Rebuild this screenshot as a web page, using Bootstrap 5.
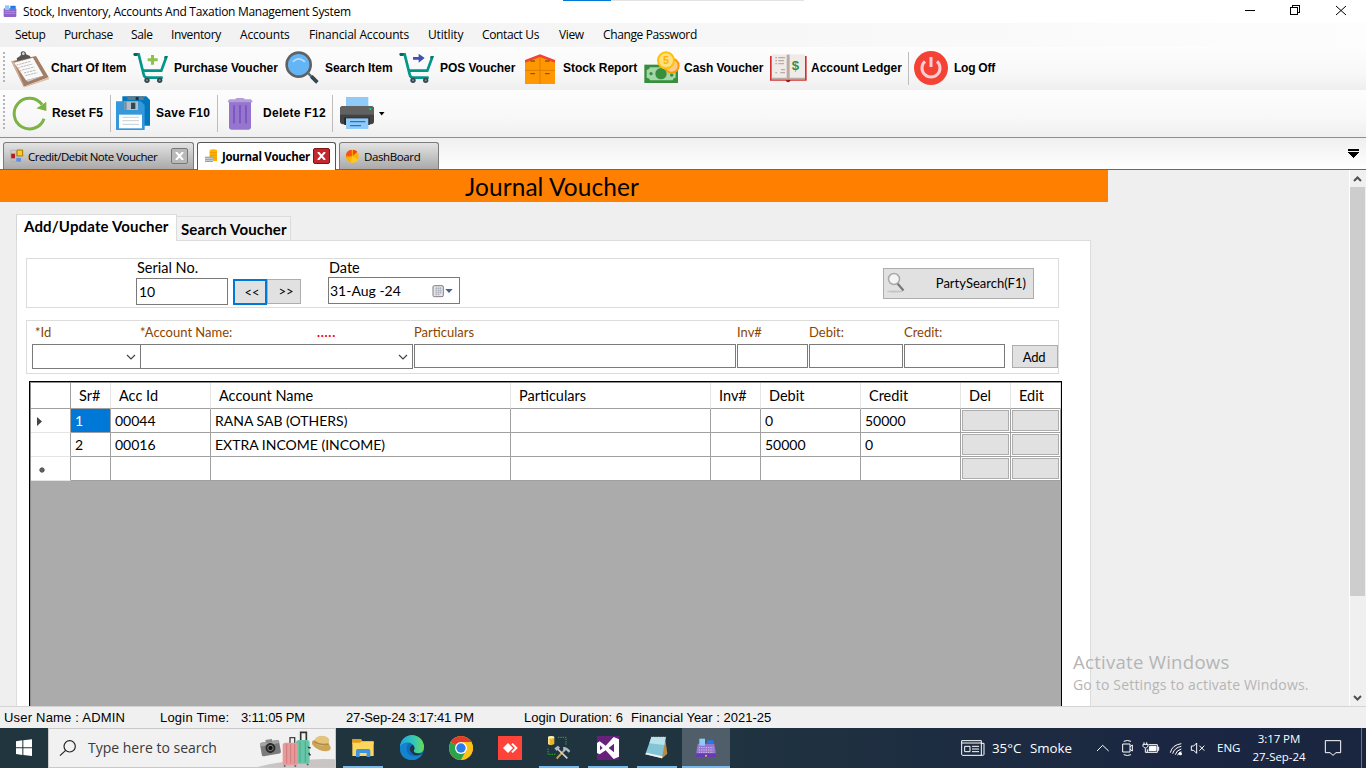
<!DOCTYPE html>
<html lang="en">
<head>
<meta charset="utf-8">
<title>Stock, Inventory, Accounts And Taxation Management System</title>
<link rel="stylesheet" href="https://cdn.jsdelivr.net/npm/bootstrap@5.3.0/dist/css/bootstrap.min.css">
<style>
body{width:1366px;height:768px;overflow:hidden;background:#f0f0f0;color:#000;font:12px/16px "Open Sans",sans-serif;display:flex;flex-direction:column}
svg{display:block;flex:none}
span,label{white-space:nowrap}
/* window frame */
.titlebar{height:23px;background:#fff;flex:none}
.titlebar .caption{letter-spacing:-.29px;width:1221px}
.progress-edge{top:0;left:563px;width:241px;height:1px;background:linear-gradient(90deg,#0078d7 48px,#e3e3e3 48px)}
.menubar{height:24px;flex:none;display:grid;grid-template-columns:49px 67px 40px 69px 69px 119px 54px 77px 44px 1fr;padding-left:15px;align-items:center;background:linear-gradient(90deg,#f0f0f0,#fdfdfd);letter-spacing:-.37px}
.menubar .ls-wide{letter-spacing:-.18px}
/* toolbars */
.toolrow{display:grid;align-items:center;flex:none;background:linear-gradient(#fdfdfd,#f8f8f8 60%,#efefef);font:bold 12px/16px "Liberation Sans",sans-serif;position:relative}
.toolrow::before{content:"";position:absolute;left:3px;top:5px;bottom:8px;width:2px;background:repeating-linear-gradient(#b5b5b5 0 2px,transparent 2px 4px)}
.toolrow span{padding-bottom:2px}
.tools-main{height:43px;padding-left:11px;grid-template-columns:40px 82px 41px 111px 40px 74px 41px 85px 38px 81px 40px 86px 41px 97px 6px 40px 1fr;letter-spacing:-.04px}
.tools-edit{height:47px;padding-left:12px;grid-template-columns:40px 58px 6px 40px 61px 10px 36px 69px 8px 38px 1fr}
.tools-edit span{letter-spacing:.28px}
.tools-edit span:nth-of-type(1){letter-spacing:.12px}
.tools-main span:last-child{letter-spacing:-.24px}
.sep{width:1px;background:#bdbdbd;align-self:stretch;margin:5px 0}
/* document tabs */
.doctabs{height:33px;flex:none;border-top:1px solid #8f8f8f;border-bottom:1px solid #696969;background:linear-gradient(#efefef,#fff);padding-left:3px;align-items:flex-end}
.doctab{height:27px;border:1px solid #7b7b7b;border-bottom:0;border-radius:3px 3px 0 0;background:linear-gradient(#e3e3e3,#a9a9a9);padding:1px 0 0 5px;font-size:11.5px;letter-spacing:-.38px}
.doctab.on{background:#fff;height:28px;margin-bottom:-1px;border-color:#555;font-weight:700;position:relative;letter-spacing:-.3px}
.dt-note{width:191px;letter-spacing:-.52px}
.dt-journal{width:139px;margin-left:3px}
.dt-dash{width:100px;margin-left:3px}
.closebox{width:17px;height:16px;border:1px solid #777;border-radius:2px;background:#b9b9b9;padding:3px;margin:-2px 5px 0 0}
.doctab.on .closebox{background:#c2282d;border-color:#7d1418}
/* workspace */
.workspace{height:536px;flex:none;overflow:hidden;background:#efefef}
.canvas{width:1349px}
.headline{width:1108px;height:32px;background:#ff8000;font:24.4px/34px Lato,sans-serif;letter-spacing:.12px;padding-left:465px}
.vtabs{padding:12px 0 0 16px;height:38px;font:bold 15px/20px Lato,sans-serif;letter-spacing:.15px;position:relative;z-index:1}
.vtab{border:1px solid #dcdcdc;border-bottom:0}
.vtab.on{width:161px;height:27px;background:#fff;padding:1px 0 0 7px;border-left-color:#d5d5d5}
.vtab.off{width:114px;height:24px;margin-top:2px;padding:2px 0 0 4px;border-left:0;background:#f2f2f2}
.sheet{margin-left:16px;width:1075px;height:480px;border:1px solid #dcdcdc;background:#fff;padding:17px 0 0 9px;font:14.5px/18px Lato,sans-serif}
.groupbox{width:1033px;border:1px solid #dcdcdc}
.g1{height:50px;padding-left:109px}
.g1 label{display:block;padding-left:1px}
.g2{height:54px;margin-top:12px;padding-left:5px;font-size:13px;color:#8b4500}
.g2-labels{display:grid;grid-template-columns:3px 105px 177px 97px 323px 72px 95px 1fr;height:23px;padding-bottom:1px;align-items:center}
.dots{color:red;font-weight:700;letter-spacing:.7px}
.field{border:1px solid #7a7a7a;background:#fff;display:flex;align-items:center;color:#000;height:24px;margin-left:1px}
.field.serial{width:92px;height:27px;margin:1px 0 0;padding-left:2px;font-size:14px}
.field.date{width:132px;height:27px;margin:0;padding-left:1px;font-size:14px}
.field.combo-id{width:109px;height:25px;margin:0}
.field.combo-name{width:273px;height:25px;margin-left:-1px}
.w-part{width:322px}.w-inv{width:71px}.w-debit{width:94px}.w-credit{width:101px}
.face{background:#e1e1e1;border:1px solid #adadad;display:flex;align-items:center;justify-content:center;color:#000}
.stepper{margin:20px 27px 0 5px;font-size:13px}
.stepper .face{width:34px;height:25px;padding:0 0 1px 4px}
.stepper .face:first-child{height:26px;border:2px solid #0078d7}
.party{width:151px;height:31px;margin:9px 24px 0 0;padding:0 7px 1px 0;font-size:13px}
.addbtn{width:46px;height:23px;margin:1px 0 0 7px;padding-right:2px;letter-spacing:-.3px}
/* voucher grid */
.gridbox{margin:7px 0 0 3px;width:1033px;height:400px;background:#ababab;border:1px solid #000;box-shadow:inset 1px 1px 0 #8f8f8f;padding:1px 0 0 1px}
.vgrid{width:1030px;table-layout:fixed;border-collapse:separate;border-spacing:0;font:14.5px/18px Lato,sans-serif}
.c40{width:40px}.c50{width:50px}.c100{width:100px}.c200{width:200px}.c300{width:300px}
.vgrid th{font-weight:400;height:26px;padding:0 0 0 8px;border-right:1px solid #e5e5e5;border-bottom:1px solid #a0a0a0;background:#fff}
.vgrid td{height:24px;padding:0 0 0 4px;border-right:1px solid #a0a0a0;border-bottom:1px solid #a0a0a0;background:#fff;font-size:14px}
.vgrid tr>:first-child{border-right-color:#a0a0a0}
.vgrid td:first-child{border-bottom-color:#e5e5e5;padding:0}
.vgrid td.picked{background:#0078d7;color:#fff}
.vgrid td.cellbtn{padding:1px}
.cellbtn i{display:block;height:21px;background:#e1e1e1;border:1px solid #adadad}
.vscroll{width:17px;border-left:1px solid #fff;background:#f0f0f0}
.vscroll b{display:block;width:15px;height:409px;background:#cdcdcd}
.watermark{left:1073px;top:650px;color:#b5b5b5;font-size:18.6px;line-height:24px;letter-spacing:.25px}
.watermark small{font-size:14px;line-height:21px;letter-spacing:.18px;display:block}
/* status line and taskbar */
.statusline{height:22px;flex:none;border-top:1px solid #d5d5d5;background:#f0f0f0;display:grid;grid-template-columns:156px 81px 105px 178px 107px 1fr;padding-left:4px;align-items:center;font:13px/16px "Liberation Sans",sans-serif}
.statusline .wide{letter-spacing:.2px}
.statusline .tight{letter-spacing:-.15px}
.taskbar{height:40px;flex:none;background:linear-gradient(90deg,#20353d,#203440 50%,#1b2742 85%,#1a2540);color:#fff}
.seek{width:288px;background:#f1f1f1;border:1px solid #c9c9c9;margin-right:2px;color:#3a3a3a;font-size:14px}
.task{width:49px;height:40px;position:relative}
.task.open::after{content:"";position:absolute;left:5px;right:4px;bottom:0;height:2px;background:#76b9ed}
.task.front{background:linear-gradient(90deg,transparent 1px,#4f5e68 1px)}
.task.front::after{left:1px;right:0}
.temp{width:38px;font-size:13.3px}
.sky{width:61px;font-size:13.3px}
.lang{width:35px;font-size:11.5px}
.clock{width:54px;margin-right:1px;font-size:11.5px;line-height:18px;text-align:center;letter-spacing:-.08px}
.peek{width:1px;height:40px;background:#68738a;margin:0 4px 0 12px}
</style>
</head>
<body>
<header class="titlebar d-flex align-items-center position-relative">
  <div class="progress-edge position-absolute"></div>
  <svg width="23" height="23" viewBox="0 0 69 69"><rect x="11" y="25" width="38" height="26" rx="3" fill="#8e62c8"/><rect x="15" y="16" width="13" height="14" fill="#8ac8fa"/><rect x="31" y="17" width="16" height="9" rx="2" fill="#1c7ce6"/><path d="M14 34H46M14 40H46" stroke="#b48be4" stroke-width="3"/></svg>
  <span class="caption">Stock, Inventory, Accounts And Taxation Management System</span>
  <svg width="122" height="23" viewBox="1244 0 122 23" fill="none" stroke="#000" shape-rendering="crispEdges"><path d="M1245 10.500H1255M1290.500 7.500H1297.500V14.500H1290.500ZM1292.500 7V5.500H1299.500V12.500H1298"/><path d="M1336 6L1346 15M1346 6L1336 15" shape-rendering="auto"/></svg>
</header>

<nav class="menubar"><span>Setup</span><span>Purchase</span><span>Sale</span><span>Inventory</span><span class="ls-wide">Accounts</span><span class="ls-wide">Financial Accounts</span><span class="ls-wide">Utitlity</span><span>Contact Us</span><span>View</span><span>Change Password</span></nav>

<div class="toolrow tools-main">
  <svg width="40" height="43" viewBox="33 141 120 129"><path d="M34 184L108 168L146 232L71 260Z" fill="#a47d65"/><path d="M34 184L71 260V255L40 182Z" fill="#d0b29d"/><path d="M71 260L146 232L147 238L75 262Z" fill="#d9c2b0"/><path d="M42 188L99 173L130 227L78 241Z" fill="#fafafa"/><path d="M130 227L78 241L84 245Z" fill="#ccc"/><path d="M50 175Q58 170 63 165Q60 154 69 154Q79 155 78 163L90 168L92 173L52 183Z" fill="#555"/><circle cx="70" cy="161" r="4" fill="#ddd"/><path d="M58 193L92 184M62 201L98 192M67 210L103 201M72 219L108 210M76 227L112 218" stroke="#aaa" stroke-width="2.500" stroke-dasharray="7 2"/><path d="M50 195L55 194M54 204L59 203M59 213L64 212" stroke="#e88" stroke-width="3"/></svg>
  <span>Chart Of Item</span>
  <svg width="41" height="43" viewBox="399 141 123 129"><g id="cart"><path d="M404 163H416L431 223Q433 233 440 233H485" fill="none" stroke="#009688" stroke-width="8" stroke-linecap="round"/><path d="M429 212H484L499 171" fill="none" stroke="#009688" stroke-width="8"/><rect x="401" y="159" width="12" height="9" rx="4" fill="#00695c"/><path d="M494 168H504L501 175H492Z" fill="#00796b"/><circle cx="441" cy="241" r="8" fill="#37474f"/><circle cx="479" cy="241" r="8" fill="#37474f"/><circle cx="441" cy="241" r="3" fill="#78909c"/><circle cx="479" cy="241" r="3" fill="#78909c"/></g><path d="M453 165H462V175H473V184H462V194H453V184H443V175H453Z" fill="#8bc34a"/></svg>
  <span>Purchase Voucher</span>
  <svg width="40" height="43" viewBox="855 141 120 129"><path d="M925 220L951 247" stroke="#546e7a" stroke-width="7"/><path d="M934 229L952 247" stroke="#37474f" stroke-width="11"/><circle cx="896" cy="194" r="40" fill="#616161"/><circle cx="896" cy="194" r="32" fill="#64b5f6"/><path d="M880 184Q896 169 913 184" fill="none" stroke="#bbdefb" stroke-width="5" stroke-linecap="round"/></svg>
  <span>Search Item</span>
  <svg width="41" height="43" viewBox="27 141 123 129"><use href="#cart" x="-372"/><path d="M69 171H86V161L104 174L86 188V179H69Z" fill="#3f51b5"/></svg>
  <span>POS Voucher</span>
  <svg width="38" height="43" viewBox="405 141 114 129"><path d="M405 184L450 165L495 184V252H405Z" fill="#ff9800"/><path d="M405 180L450 163L495 180V188L450 171L405 188Z" fill="#f44336"/><path d="M450 172V252M405 211H495" stroke="#dd7d00" stroke-width="3"/><path d="M421 183H435M465 183H479M421 221H435M465 221H479" stroke="#8a5a00" stroke-width="4"/></svg>
  <span>Stock Report</span>
  <svg width="40" height="43" viewBox="762 141 120 129"><rect x="763" y="194" width="101" height="55" fill="#388e3c"/><path d="M780 202H848Q849 209 857 210V233Q849 234 848 241H780Q779 234 770 233V210Q779 209 780 202Z" fill="#a5d6a7"/><circle cx="813" cy="221" r="17" fill="#388e3c"/><circle cx="783" cy="221" r="5" fill="#388e3c"/><circle cx="845" cy="225" r="5" fill="#388e3c"/><circle cx="845" cy="197" r="24" fill="#ff9800"/><circle cx="845" cy="197" r="18" fill="#ffc98a"/><circle cx="828" cy="181" r="27" fill="#ffc107"/><circle cx="828" cy="181" r="21" fill="#ffe082"/><text x="828" y="193" text-anchor="middle" font-family="Liberation Sans" font-weight="bold" font-size="32" fill="#ffb300">5</text></svg>
  <span>Cash Voucher</span>
  <svg width="41" height="43" viewBox="1140 141 123 129"><path d="M1140 168H1250V242H1140Z" fill="#d32f2f"/><path d="M1188 240H1202Q1200 247 1194 247T1188 240Z" fill="#a01c1c"/><path d="M1145 163H1194V236H1145ZM1196 163H1245V236H1196Z" fill="#efebe9"/><path d="M1145 233H1190L1194 238L1198 233H1245V239H1145Z" fill="#bcaaa4"/><path d="M1190 164H1199V236H1190Z" fill="#bcaaa4"/><path d="M1156 173H1161M1165 173H1185M1156 182H1161M1165 182H1182M1156 191H1161M1165 191H1182M1173 209H1185M1156 218H1161M1171 218H1185" stroke="#bcaaa4" stroke-width="4"/><text x="1216" y="210" text-anchor="middle" font-family="Liberation Sans" font-weight="bold" font-size="40" fill="#388e3c">$</text></svg>
  <span>Account Ledger</span>
  <i class="sep"></i>
  <svg width="40" height="43" viewBox="0 141 120 129"><circle cx="51" cy="204" r="51" fill="#f44336"/><path d="M33 184A27 27 0 1 0 69 184" fill="none" stroke="#ffcdd2" stroke-width="9"/><path d="M51 171V201" stroke="#ffcdd2" stroke-width="9"/></svg>
  <span>Log Off</span>
</div>

<div class="toolrow tools-edit">
  <svg width="40" height="47" viewBox="36 270 120 141"><path d="M132 356A46 46 0 1 1 126 314" fill="none" stroke="#7cb342" stroke-width="9"/><path d="M139 305V333L109 325L122 317Z" fill="#7cb342"/></svg>
  <span>Reset F5</span>
  <i class="sep"></i>
  <svg width="40" height="47" viewBox="348 270 120 141"><path d="M367 289H439L450 300V377H367Z" fill="#0277bd"/><path d="M382 289H431V300H382Z" fill="#607d8b"/><path d="M407 291H416V300H407Z" fill="#263238"/><path d="M348 304H423L434 315V390H348Z" fill="#3498db"/><path d="M373 304H414V330H373Z" fill="#b0bec5"/><path d="M373 304H380V330H373Z" fill="#78909c"/><path d="M393 308H406V327H393Z" fill="#37474f"/><path d="M357 344H426V385H357Z" fill="#fff"/><path d="M367 352H417M367 362H417M367 373H417" stroke="#cfd8dc" stroke-width="4"/></svg>
  <span>Save F10</span>
  <i class="sep"></i>
  <svg width="36" height="47" viewBox="681 270 108 141"><path d="M687 306H753V382Q753 389 746 389H694Q687 389 687 382Z" fill="#9575cd"/><path d="M702 318V368M720 318V368M738 318V368" stroke="#7e57c2" stroke-width="6" stroke-linecap="round"/><path d="M706 298Q707 294 712 294H728Q733 294 734 298H752Q757 299 758 307H683Q684 299 689 298Z" fill="#b39ddb"/></svg>
  <span>Delete F12</span>
  <i class="sep"></i>
  <svg width="38" height="47" viewBox="1020 270 114 141"><path d="M1038 291H1105V325H1038Z" fill="#90caf9"/><rect x="1020" y="318" width="102" height="55" rx="9" fill="#424242"/><path d="M1029 318H1113Q1122 320 1122 328V344H1020V328Q1021 319 1029 318Z" fill="#616161"/><circle cx="1111" cy="327" r="3" fill="#00e676"/><path d="M1033 353H1109V375H1033Z" fill="#242424"/><path d="M1038 355H1105V387H1038Z" fill="#90caf9"/><path d="M1050 365H1096M1050 377H1083" stroke="#1976d2" stroke-width="4"/></svg>
  <svg width="8" height="47" viewBox="0 0 8 47"><path d="M1 22H6.500L3.700 25.500Z"/></svg>
</div>

<div class="doctabs d-flex">
  <div class="doctab dt-note d-flex align-items-center">
    <svg width="19" height="20" viewBox="24 184 57 60"><path d="M30 204H42V218H30Z" fill="#b71c1c"/><path d="M29 194H46V228H30Z" fill="none" stroke="#aaa" stroke-width="2"/><path d="M48 193H65V211H48Z" fill="#ffca28" stroke="#a87b00" stroke-width="3"/><path d="M46 217H60V228H46Z" fill="#5b8fe8"/></svg>
    <span class="me-auto">Credit/Debit Note Voucher</span><div class="closebox"><svg width="9" height="8" viewBox="0 0 9 8"><path d="M1 0L8 8M8 0L1 8" stroke="#fff" stroke-width="2"/></svg></div>
  </div>
  <div class="doctab dt-journal on d-flex align-items-center">
    <svg width="19" height="20" viewBox="606 182 57 60"><path d="M626 191Q637 187 648 191V224H626Z" fill="#ffb300"/><path d="M626 199H648M626 207H648M626 215H648" stroke="#e09000" stroke-width="2"/><path d="M612 211H636V227H612Z" fill="#90a4ae"/><path d="M612 216H636M612 222H636" stroke="#eceff1" stroke-width="2"/></svg>
    <span class="me-auto">Journal Voucher</span><div class="closebox"><svg width="9" height="8" viewBox="0 0 9 8"><path d="M1 0L8 8M8 0L1 8" stroke="#fff" stroke-width="2"/></svg></div>
  </div>
  <div class="doctab dt-dash d-flex align-items-center">
    <svg width="19" height="20" viewBox="1033 182 57 60"><circle cx="1055" cy="210" r="19" fill="#ffb300"/><path d="M1055 210V191A19 19 0 0 0 1036 214Z" fill="#ff8f00"/><path d="M1053 210L1036 208A19 19 0 0 1 1053 190Z" fill="#f4511e"/><path d="M1057 208V190A19 19 0 0 1 1070 196Z" fill="#f4421f"/><path d="M1055 210L1072 220A19 19 0 0 1 1050 228Z" fill="#ffca28"/></svg>
    <span>DashBoard</span>
  </div>
  <svg class="ms-auto me-1" width="16" height="26" viewBox="0 0 16 26" shape-rendering="crispEdges"><path d="M2 6H13V8H2ZM2 9H13L7.500 15Z"/></svg>
</div>

<main class="workspace d-flex">
  <div class="canvas">
    <div class="headline"><span>Journal Voucher</span></div>
    <div class="vtabs d-flex"><div class="vtab on"><span>Add/Update Voucher</span></div><div class="vtab off"><span>Search Voucher</span></div></div>
    <div class="sheet">
      <div class="groupbox g1 d-flex">
        <div><label>Serial No.</label><div class="field serial"><span>10</span></div></div>
        <div class="stepper d-flex"><div class="face">&lt;&lt;</div><div class="face">&gt;&gt;</div></div>
        <div><label>Date</label><div class="field date"><span class="me-auto">31-Aug -24</span><svg width="27" height="20" viewBox="1297 240 81 60"><rect x="1300" y="254" width="31" height="33" rx="4" fill="#e5e5e9" stroke="#857a7e" stroke-width="3"/><path d="M1306 262H1326M1306 268H1326M1306 274H1326M1306 280H1320M1310 258V283M1317 258V283M1323 258V279" stroke="#9a9fb0" stroke-width="1.500"/><path d="M1337 264H1359L1348 276Z" fill="#44608e"/></svg></div></div>
        <div class="face party ms-auto"><svg class="me-auto" width="28" height="28" viewBox="0 0 28 28"><ellipse cx="11" cy="22.500" rx="8" ry="1" fill="#c4c4c4"/><path d="M13 14L19.500 21.500" stroke="#777" stroke-width="2.200"/><circle cx="10" cy="10" r="5.500" fill="#f4f4f4" stroke="#a9a9a9" stroke-width="1.500"/></svg><span>PartySearch(F1)</span></div>
      </div>
      <div class="groupbox g2">
        <div class="g2-labels"><i></i><span>*Id</span><span>*Account Name:</span><span class="dots">.....</span><span>Particulars</span><span>Inv#</span><span>Debit:</span><span>Credit:</span></div>
        <div class="d-flex">
          <div class="field combo-id"><svg class="ms-auto me-1" width="10" height="8" viewBox="0 0 10 8"><path d="M1 2L5 6L9 2" fill="none" stroke="#444" stroke-width="1.200"/></svg></div>
          <div class="field combo-name"><svg class="ms-auto me-1" width="10" height="8" viewBox="0 0 10 8"><path d="M1 2L5 6L9 2" fill="none" stroke="#444" stroke-width="1.200"/></svg></div>
          <div class="field w-part"></div><div class="field w-inv"></div><div class="field w-debit"></div><div class="field w-credit"></div>
          <div class="face addbtn"><span>Add</span></div>
        </div>
      </div>
      <div class="gridbox">
        <table class="vgrid">
          <colgroup><col class="c40"><col class="c40"><col class="c100"><col class="c300"><col class="c200"><col class="c50"><col class="c100"><col class="c100"><col class="c50"><col class="c50"></colgroup>
          <tr><th></th><th>Sr#</th><th>Acc Id</th><th>Account Name</th><th>Particulars</th><th>Inv#</th><th>Debit</th><th>Credit</th><th>Del</th><th>Edit</th></tr>
          <tr><td><svg width="20" height="20" viewBox="0 0 20 20"><path d="M6 6L11 10.500L6 15Z" fill="#444"/></svg></td><td class="picked">1</td><td>00044</td><td>RANA SAB (OTHERS)</td><td></td><td></td><td>0</td><td>50000</td><td class="cellbtn"><i></i></td><td class="cellbtn"><i></i></td></tr>
          <tr><td></td><td>2</td><td>00016</td><td>EXTRA INCOME (INCOME)</td><td></td><td></td><td>50000</td><td>0</td><td class="cellbtn"><i></i></td><td class="cellbtn"><i></i></td></tr>
          <tr><td><svg width="20" height="20" viewBox="0 0 20 20"><circle cx="11" cy="11" r="2.500" fill="#555"/><path d="M11 8V14M8 11H14M9 9L13 13M13 9L9 13" stroke="#666" stroke-width=".7"/></svg></td><td></td><td></td><td></td><td></td><td></td><td></td><td></td><td class="cellbtn"><i></i></td><td class="cellbtn"><i></i></td></tr>
        </table>
      </div>
    </div>
  </div>
  <div class="vscroll d-flex flex-column">
    <svg width="16" height="17" viewBox="0 0 16 17"><path d="M4 11L7.500 7.500L11 11" fill="none" stroke="#505050" stroke-width="2"/></svg><b></b>
    <svg class="mt-auto" width="16" height="17" viewBox="0 0 16 17"><path d="M4 7L7.500 10.500L11 7" fill="none" stroke="#505050" stroke-width="2"/></svg>
  </div>
</main>
<div class="watermark position-absolute"><span>Activate Windows</span><small><span>Go to Settings to activate Windows.</span></small></div>

<footer class="statusline"><span class="wide">User Name : ADMIN</span><span class="wide">Login Time:</span><span class="tight">3:11:05 PM</span><span class="tight">27-Sep-24 3:17:41 PM</span><span>Login Duration: 6</span><span>Financial Year : 2021-25</span></footer>

<div class="taskbar d-flex align-items-center">
  <svg width="48" height="40" viewBox="0 84 144 120" fill="#fff"><path d="M48 124L67 121V142H48ZM70 121L96 118V142H70ZM48 145H67V165L48 162ZM70 145H96V168L70 165Z"/></svg>
  <div class="seek d-flex align-items-center align-self-stretch">
    <svg width="39" height="38" viewBox="147 87 117 114"><circle cx="209" cy="139" r="17" fill="none" stroke="#222" stroke-width="3.500"/><path d="M197 151L180 167" stroke="#222" stroke-width="3.500"/></svg>
    <span class="me-auto">Type here to search</span>
    <svg width="78" height="38" viewBox="774 87 234 114"><path d="M774 201Q840 184 900 182Q960 174 1008 178V201Z" fill="#c9c5c5"/><g transform="rotate(-10 814 142)"><rect x="785" y="124" width="58" height="41" rx="5" fill="#7b7b7b"/><rect x="785" y="124" width="58" height="10" rx="4" fill="#a4a4a4"/><rect x="803" y="118" width="20" height="9" fill="#8b8b8b"/><circle cx="814" cy="144" r="15" fill="#2a2a2a"/><circle cx="814" cy="144" r="8" fill="#111" stroke="#aaa" stroke-width="2"/></g><path d="M905 124V97H922V124" fill="none" stroke="#333" stroke-width="5"/><path d="M873 131V113H887V131" fill="none" stroke="#444" stroke-width="4"/><rect x="891" y="120" width="41" height="71" rx="8" fill="#68c6a8"/><path d="M903 124V187M919 124V187" stroke="#4aa688" stroke-width="3"/><rect x="851" y="128" width="45" height="68" rx="8" fill="#e89a9a"/><path d="M863 132V190M875 132V190M887 132V190" stroke="#cf7c7c" stroke-width="3"/><path d="M857 196V200M889 196V200M926 191V196" stroke="#555" stroke-width="5"/><path d="M928 140Q928 145 935 143M930 158Q930 166 935 164" stroke="#333" stroke-width="4"/><ellipse cx="967" cy="136" rx="30" ry="15" transform="rotate(22 967 136)" fill="#cda557"/><ellipse cx="969" cy="122" rx="22" ry="15" fill="#e3c47f"/><path d="M946 124Q962 137 990 132" stroke="#b28a42" stroke-width="5" fill="none"/></svg>
  </div>
  <div class="task open"><svg width="49" height="40" viewBox="1014 84 147 120"><path d="M1057 117H1083L1087 123H1121V133H1057Z" fill="#e8a33d"/><path d="M1057 125H1121V168H1057Z" fill="#ffd65c"/><path d="M1057 117H1081L1084 124L1080 128H1057Z" fill="#e39b1c"/><path d="M1068 171V152Q1068 147 1073 147H1106Q1111 147 1111 152V171H1100V159H1079V171Z" fill="#3d95e0"/></svg></div>
  <div class="task"><svg width="49" height="40" viewBox="21 84 147 120"><defs><linearGradient id="eg" x1="0" x2="1"><stop offset="0" stop-color="#1fa5e8"/><stop offset=".6" stop-color="#36c9b0"/><stop offset="1" stop-color="#6bdc56"/></linearGradient></defs><circle cx="96" cy="144" r="36" fill="#0f6cbd"/><path d="M60 141A36 36 0 0 1 132 141Q132 160 111 160Q96 159 102 150Q107 143 99 134Q88 124 73 130Q64 134 60 141Z" fill="url(#eg)"/><path d="M60 144Q66 127 88 129Q77 136 80 152Q86 170 106 169Q118 168 127 162Q116 180 96 180Q60 178 60 144Z" fill="#1584cf"/><path d="M98 134Q88 139 90 151Q95 166 112 166Q122 165 127 160Q116 162 108 159Q99 156 102 150Q106 142 98 134Z" fill="#20353f"/></svg></div>
  <div class="task"><svg width="49" height="40" viewBox="168 84 147 120"><circle cx="243" cy="144" r="36" fill="#fbc116"/><path d="M243 144L212 126A36 36 0 0 1 274 126Z" fill="#e33b2e"/><path d="M243 144L212 126A36 36 0 0 0 243 180L258 153Z" fill="#2ba24c"/><path d="M243 126H274A36 36 0 0 1 243 180L258 153Z" fill="#fbc116"/><circle cx="243" cy="144" r="18" fill="#fff"/><circle cx="243" cy="144" r="14" fill="#2b7de9"/></svg></div>
  <div class="task"><svg width="49" height="40" viewBox="315 84 147 120"><path d="M354 108H426V180H354Z" fill="#ff4338"/><path d="M384 129L399 144L384 159L369 144Z" fill="#fff"/><path d="M396 131L409 144L396 157" fill="none" stroke="#fff" stroke-width="6"/></svg></div>
  <div class="task open"><svg width="49" height="40" viewBox="462 84 147 120"><path d="M504 112V132Q513 139 523 132V112Z" fill="#e5b530"/><path d="M504 112V132L509 135V112Z" fill="#f9e38f"/><ellipse cx="513.500" cy="112" rx="9.500" ry="4" fill="#fff0a8"/><path d="M534 112H558V134M504 146V163H528" fill="none" stroke="#29b329" stroke-width="3" stroke-dasharray="4 3"/><path d="M530 176L558 145" stroke="#d6a23a" stroke-width="6"/><path d="M530 144L562 175" stroke="#cfd6dc" stroke-width="5"/><path d="M523 145L534 137L540 143L530 153ZM549 141Q560 139 571 153L566 158L558 150L551 156Z" fill="#aeb9c4"/></svg></div>
  <div class="task open"><svg width="49" height="40" viewBox="609 84 147 120"><path d="M651 108H718V180H651Z" fill="#68217a"/><path d="M651 129L659 124L677 137L701 111L717 118V170L701 177L677 151L659 163L651 159ZM660 136V151L668 144ZM702 131L686 144L702 157Z" fill="#fff" fill-rule="evenodd"/></svg></div>
  <div class="task open"><svg width="49" height="40" viewBox="756 84 147 120"><path d="M856 118L862 161L845 176L848 120Z" fill="#b78a45"/><path d="M814 112H857L846 175L796 163Z" fill="#83c5d6"/><path d="M814 112H857L853 135L808 130Z" fill="#b9e3ea"/><path d="M796 163L799 158L847 169L846 175Z" fill="#f2f2f2"/><path d="M814 112H857" stroke="#ddd" stroke-width="4" stroke-dasharray="3 2"/></svg></div>
  <div class="task open front"><svg width="49" height="40" viewBox="903 84 147 120"><path d="M953 131H1003L1008 163H948Z" fill="#9575cd"/><path d="M948 160H1008V167Q1008 171 1003 171H953Q948 171 948 167Z" fill="#673ab7"/><rect x="958" y="116" width="17" height="21" fill="#90caf9"/><rect x="981" y="121" width="20" height="10" rx="3" fill="#2979e6"/><path d="M956 143H1000M956 150H1000M956 157H1000" stroke="#d1c4e9" stroke-width="3" stroke-dasharray="4 3"/><circle cx="978" cy="167" r="3" fill="#ffc107"/></svg></div>

  <div class="ms-auto d-flex align-items-center">
    <svg width="36" height="40" viewBox="48 264 108 120" fill="none" stroke="#fff" stroke-width="3"><path d="M65 302H124V346H68Q65 346 65 343ZM124 310H132V343Q132 346 128 346H122M65 309H124M74 319H90V335H74ZM96 319H117M96 327H117M96 335H117"/></svg>
    <span class="temp">35°C</span><span class="sky">Smoke</span>
    <svg width="24" height="40" viewBox="456 264 72 120" fill="none" stroke="#fff" stroke-width="3"><path d="M474 333L491 316L509 333"/></svg>
    <svg width="24" height="40" viewBox="528 264 72 120" fill="none" stroke="#fff" stroke-width="3"><path d="M551 312H573V336H551ZM573 320L580 315V333L573 328M554 304Q565 299 576 304M554 344Q565 349 576 344"/></svg>
    <svg width="25" height="40" viewBox="600 264 75 120" fill="none" stroke="#fff" stroke-width="3"><path d="M629 314H655V337H625V328M656 321H659V331H656M615 307V313M623 307V313M612 313H627V319Q619 329 612 319ZM619 325V337H626"/><path d="M632 319H651V332H630Z" fill="#fff"/></svg>
    <svg width="23" height="40" viewBox="675 264 69 120" fill="none" stroke="#fff" stroke-width="3"><path d="M694 338Q699 315 727 311M701 341Q706 323 727 319M709 344Q713 330 727 327"/><circle cx="724" cy="341" r="5" fill="#fff" stroke="none"/><path d="M716 346Q718 338 727 335"/></svg>
    <svg width="30" height="40" viewBox="744 264 90 120" fill="none" stroke="#fff" stroke-width="3"><path d="M757 318H764L773 309V340L764 331H757ZM781 317L796 332M796 317L781 332"/></svg>
    <span class="lang">ENG</span>
    <div class="clock"><span>3:17 PM</span><br><span>27-Sep-24</span></div>
    <svg width="42" height="40" viewBox="1101 264 126 120" fill="none" stroke="#fff" stroke-width="3"><path d="M1156 302H1202V338H1188L1179 346L1170 338H1156Z"/></svg>
    <i class="peek"></i>
  </div>
</div>
<script src="https://cdn.jsdelivr.net/npm/bootstrap@5.3.0/dist/js/bootstrap.bundle.min.js"></script>
</body>
</html>
